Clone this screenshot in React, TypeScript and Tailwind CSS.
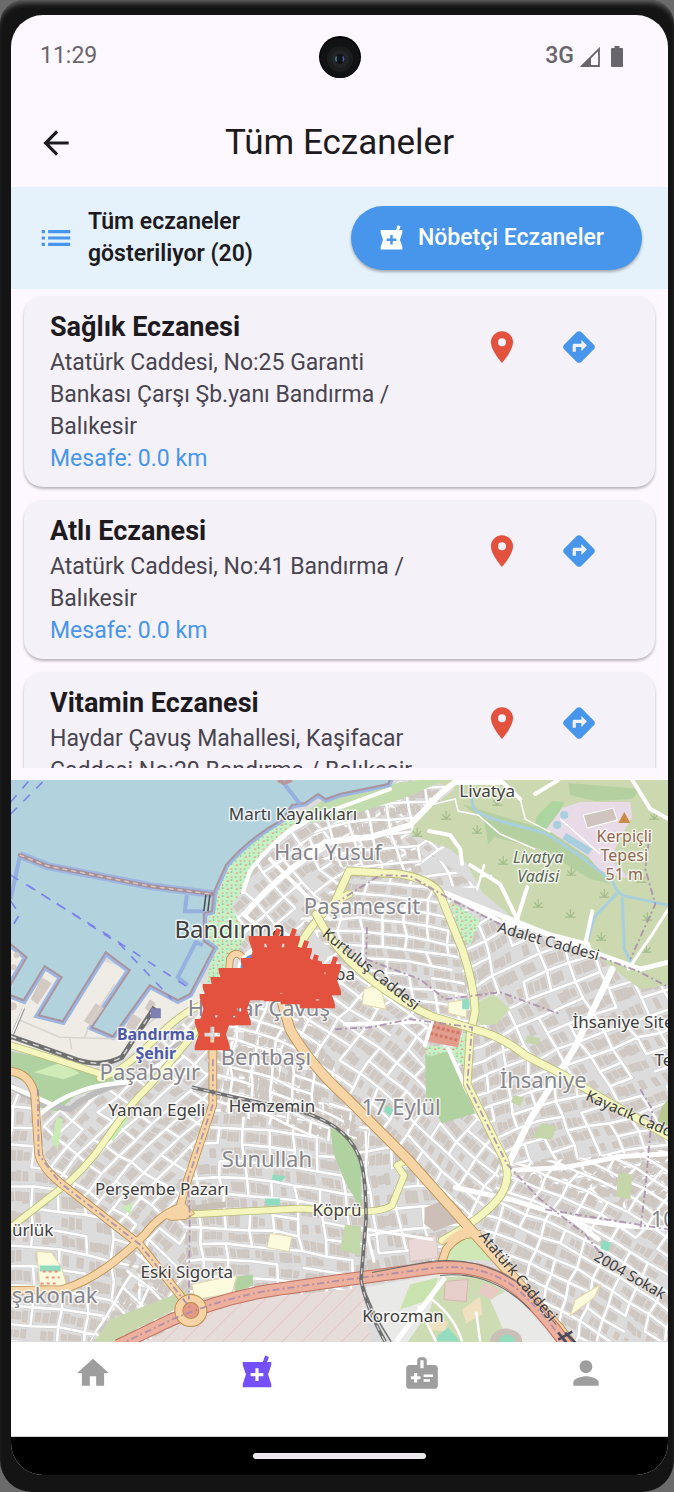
import React from "react";
import {
  MdArrowBack,
  MdDirections,
  MdHome,
  MdList,
  MdLocalPharmacy,
  MdLocationOn,
  MdMedicalInformation,
  MdPerson,
} from "react-icons/md";

type Pharmacy = { name: string; address: string; distance: string };

const pharmacies: Pharmacy[] = [
  {
    name: "Sağlık Eczanesi",
    address: "Atatürk Caddesi, No:25 Garanti Bankası Çarşı Şb.yanı Bandırma / Balıkesir",
    distance: "0.0 km",
  },
  {
    name: "Atlı Eczanesi",
    address: "Atatürk Caddesi, No:41 Bandırma / Balıkesir",
    distance: "0.0 km",
  },
  {
    name: "Vitamin Eczanesi",
    address: "Haydar Çavuş Mahallesi, Kaşifacar Caddesi No:20 Bandırma / Balıkesir",
    distance: "0.0 km",
  },
];

/* ---------- Street blocks: jittered grids clipped to each district ---------- */

type District = {
  id: string;
  area: string;
  cx: number;
  cy: number;
  reach: number;
  angle: number;
  w: number;
  h: number;
};

const districts: District[] = [
  { id: "west", area: "11,1085 40,1100 45,1165 190,1300 120,1342 11,1342", cx: 90, cy: 1220, reach: 170, angle: 6, w: 27, h: 19 },
  { id: "pasabayir", area: "60,1110 130,1070 205,1005 215,1100 180,1210 140,1245 45,1170 42,1110", cx: 130, cy: 1130, reach: 160, angle: -48, w: 24, h: 14 },
  { id: "sigorta", area: "140,1245 185,1205 195,1310 190,1342 90,1342", cx: 160, cy: 1280, reach: 110, angle: 38, w: 24, h: 17 },
  { id: "sunullah", area: "213,1030 290,1030 370,1120 366,1290 190,1310 182,1210 213,1110", cx: 275, cy: 1170, reach: 180, angle: 3, w: 25, h: 16 },
  { id: "hacicavus", area: "200,985 290,985 345,1090 360,1150 213,1110", cx: 280, cy: 1060, reach: 120, angle: 16, w: 21, h: 12 },
  { id: "yusuf", area: "222,905 262,845 345,790 410,781 450,800 450,845 400,880 345,875 300,945 240,960", cx: 330, cy: 870, reach: 150, angle: -38, w: 24, h: 15 },
  { id: "sahil", area: "330,815 400,783 450,781 410,840 480,890 430,885 350,872 300,850", cx: 380, cy: 840, reach: 120, angle: -10, w: 20, h: 14 },
  { id: "pasamescit", area: "300,920 350,874 410,876 445,900 475,1030 420,1015 340,960", cx: 390, cy: 940, reach: 120, angle: 3, w: 22, h: 12 },
  { id: "merkez", area: "285,985 340,950 430,1015 475,1030 467,1090 505,1165 475,1225 400,1155 300,1050", cx: 390, cy: 1085, reach: 170, angle: 38, w: 24, h: 15 },
  { id: "adalet", area: "445,895 520,925 600,955 668,975 668,1130 560,1070 475,1030", cx: 570, cy: 1010, reach: 160, angle: -24, w: 25, h: 18 },
  { id: "ihsaniye", area: "472,1030 560,1070 668,1135 668,1220 505,1180 468,1090", cx: 570, cy: 1120, reach: 150, angle: -16, w: 22, h: 15 },
  { id: "dogu", area: "505,1165 668,1150 668,1342 565,1342 480,1225", cx: 590, cy: 1250, reach: 160, angle: 27, w: 22, h: 14 },
  { id: "kopru", area: "340,1115 410,1160 475,1235 440,1275 366,1285 366,1170", cx: 405, cy: 1215, reach: 120, angle: -8, w: 25, h: 20 },
];

function makeRandom(seed: number) {
  let s = seed;
  return () => {
    s = (s * 16807) % 2147483647;
    return s / 2147483647;
  };
}

function buildDistrict(d: District, seed: number) {
  const rnd = makeRandom(seed);
  const rad = (d.angle * Math.PI) / 180;
  const cos = Math.cos(rad);
  const sin = Math.sin(rad);
  const cols = Math.ceil(d.reach / d.w);
  const rows = Math.ceil(d.reach / d.h);
  const nodes = new Map<string, [number, number]>();
  for (let i = -cols; i <= cols + 1; i++) {
    for (let j = -rows; j <= rows + 1; j++) {
      const bend = Math.sin(i * 0.45 + seed) * 6 + Math.sin(j * 0.3) * 3;
      const x = i * d.w + (rnd() - 0.5) * 4 + Math.sin(j * 0.35 + seed) * 8;
      const y = j * d.h + (rnd() - 0.5) * 3 + bend;
      nodes.set(`${i},${j}`, [d.cx + x * cos - y * sin, d.cy + x * sin + y * cos]);
    }
  }
  const at = (i: number, j: number) => nodes.get(`${i},${j}`)!;
  let streets = "";
  let houses = "";
  for (let i = -cols; i <= cols; i++) {
    for (let j = -rows; j <= rows; j++) {
      const a = at(i, j);
      const b = at(i + 1, j);
      const c = at(i + 1, j + 1);
      const e = at(i, j + 1);
      if (rnd() > 0.12) streets += `M${a[0].toFixed(1)} ${a[1].toFixed(1)}L${b[0].toFixed(1)} ${b[1].toFixed(1)}`;
      if (rnd() > 0.22) streets += `M${a[0].toFixed(1)} ${a[1].toFixed(1)}L${e[0].toFixed(1)} ${e[1].toFixed(1)}`;
      const point = (u: number, v: number) => {
        const px = (a[0] * (1 - u) + b[0] * u) * (1 - v) + (e[0] * (1 - u) + c[0] * u) * v;
        const py = (a[1] * (1 - u) + b[1] * u) * (1 - v) + (e[1] * (1 - u) + c[1] * u) * v;
        return `${px.toFixed(1)} ${py.toFixed(1)}`;
      };
      for (let k = 0; k < 3; k++) {
        if (rnd() < 0.12) continue;
        const u0 = 0.14 + k * 0.26;
        const u1 = u0 + 0.17 + rnd() * 0.07;
        const v0 = 0.2 + rnd() * 0.12;
        const v1 = 0.68 + rnd() * 0.14;
        houses += `M${point(u0, v0)}L${point(u1, v0)}L${point(u1, v1)}L${point(u0, v1)}Z`;
      }
    }
  }
  return { streets, houses };
}

const builtDistricts = districts.map((d, i) => ({ ...d, ...buildDistrict(d, 37 + i * 911) }));

/* ---------- Roads ---------- */

const yellowRoads = [
  { d: "M11 1046C45 1056 75 1066 105 1076M100 1079C140 1067 160 1024 200 1006", w: 6 },
  { d: "M205 1022C180 1050 165 1072 140 1096C110 1128 105 1150 70 1182L11 1228", w: 6 },
  { d: "M300 945Q325 905 349 895M334 905L349 872L400 875Q438 882 442 900L462 950Q474 985 475 1012L470 1035L467 1085L500 1152Q514 1175 500 1197Q482 1220 442 1241", w: 7 },
  { d: "M316 915Q332 945 350 962Q385 996 432 1017L474 1030Q502 1037 525 1056L562 1075L600 1098L668 1137", w: 7 },
  { d: "M188 1215L300 1209L340 1212Q380 1214 392 1206L404 1176L397 1166L409 1160", w: 6 },
];

const orangeRoads = [
  { d: "M11 1072Q30 1074 35 1095L39 1155Q42 1168 60 1183L140 1245L190 1308", w: 7 },
  { d: "M213 1040L213 1105L188 1180L180 1208Q160 1215 145 1235Q100 1280 62 1290L11 1291", w: 7 },
  { d: "M228 985L230 960Q236 948 246 962", w: 6 },
  { d: "M280 995L290 1030Q310 1065 345 1097L408 1160L475 1235L560 1330L572 1346", w: 9 },
  { d: "M440 1268L446 1250Q460 1231 480 1235", w: 7 },
];

const trunkRoad = "M118 1346L170 1321Q220 1299 270 1291L340 1281L430 1269Q485 1262 520 1292Q545 1315 568 1348";

const coast =
  "M0 770L392 776L388 785L340 795L326 800L318 795L305 804L292 806L283 820Q250 838 226 866L214 893L212 912L204 914L204 942L214 949L190 995L178 1001L150 986L113 1037L92 1028L130 971L106 953L63 1022L39 1016L62 978L45 967L24 1001L6 994L27 958L11 945L0 945Z";

/* ---------- Labels ---------- */

type Label = { x: number; y: number; text: string; size: number; fill: string; rotate?: number; weight?: number; italic?: boolean };

const dark = "#3f3f3f";
const grey = "#85858c";
const brown = "#90684e";
const indigo = "#4d5aa8";

const labels: Label[] = [
  { x: 487, y: 798, text: "Livatya", size: 17, fill: dark },
  { x: 293, y: 821, text: "Martı Kayalıkları", size: 17, fill: dark },
  { x: 328, y: 861, text: "Hacı Yusuf", size: 22, fill: grey },
  { x: 362, y: 915, text: "Paşamescit", size: 22, fill: grey },
  { x: 230, y: 939, text: "Bandırma", size: 24, fill: dark },
  { x: 624, y: 843, text: "Kerpiçli", size: 16, fill: brown },
  { x: 624, y: 862, text: "Tepesi", size: 16, fill: brown },
  { x: 624, y: 881, text: "51 m", size: 16, fill: brown },
  { x: 538, y: 864, text: "Livatya", size: 16, fill: "#5b6654", italic: true },
  { x: 538, y: 883, text: "Vadisi", size: 16, fill: "#5b6654", italic: true },
  { x: 547, y: 947, text: "Adalet Caddesi", size: 15, fill: dark, rotate: 16 },
  { x: 368, y: 974, text: "Kurtuluş Caddesi", size: 15, fill: dark, rotate: 39 },
  { x: 345, y: 981, text: "ba", size: 17, fill: dark },
  { x: 259, y: 1017, text: "Haydar Çavuş", size: 22, fill: grey },
  { x: 629, y: 1029, text: "İhsaniye Sitesi", size: 17, fill: dark },
  { x: 663, y: 1067, text: "Te", size: 17, fill: dark },
  { x: 156, y: 1041, text: "Bandırma", size: 16, fill: indigo, weight: 700 },
  { x: 156, y: 1060, text: "Şehir", size: 16, fill: indigo, weight: 700 },
  { x: 266, y: 1066, text: "Bentbaşı", size: 22, fill: grey },
  { x: 150, y: 1081, text: "Paşabayır", size: 22, fill: grey },
  { x: 543, y: 1089, text: "İhsaniye", size: 22, fill: grey },
  { x: 157, y: 1117, text: "Yaman Egeli", size: 17, fill: dark },
  { x: 272, y: 1113, text: "Hemzemin", size: 17, fill: dark },
  { x: 401, y: 1116, text: "17 Eylül", size: 22, fill: grey },
  { x: 636, y: 1123, text: "Kayacık Caddesi", size: 15, fill: dark, rotate: 24 },
  { x: 267, y: 1168, text: "Sunullah", size: 22, fill: grey },
  { x: 162, y: 1196, text: "Perşembe Pazarı", size: 17, fill: dark },
  { x: 337, y: 1217, text: "Köprü", size: 17, fill: dark },
  { x: 33, y: 1237, text: "ürlük", size: 17, fill: dark },
  { x: 663, y: 1228, text: "10", size: 22, fill: grey },
  { x: 187, y: 1278, text: "Eski Sigorta", size: 17, fill: dark },
  { x: 55, y: 1303, text: "şakonak", size: 22, fill: grey },
  { x: 403, y: 1322, text: "Korozman", size: 17, fill: dark },
  { x: 514, y: 1280, text: "Atatürk Caddesi", size: 15, fill: dark, rotate: 50 },
  { x: 627, y: 1280, text: "2004 Sokak", size: 15, fill: dark, rotate: 30 },
];

/* Top-left corner of the body of each pharmacy marker */
const markers: [number, number][] = [
  [249, 937], [265, 937], [277, 949], [287, 963], [306, 965], [241, 959],
  [252, 962], [219, 969], [230, 970], [211, 978], [203, 985], [200, 995],
  [216, 995], [245, 966], [264, 971], [281, 974], [300, 978], [290, 969],
  [268, 955], [195, 1020],
];

const pharmacyShape =
  "M21 5h-2.64l1.14-3.14L17.15 1l-1.46 4H3v2l2 6-2 6v2h18v-2l-2-6 2-6V5zm-5 9h-3v3h-2v-3H8v-2h3V9h2v3h3v2z";

const scrubs: [number, number][] = [
  [446, 820], [477, 834], [417, 837], [503, 865], [571, 876], [538, 908], [570, 918],
  [604, 898], [601, 941], [646, 953], [647, 921], [641, 883], [497, 806], [654, 820],
];

function CityMap() {
  return (
    <svg
      viewBox="11 781 657 561"
      preserveAspectRatio="xMidYMid slice"
      className="block h-full w-full"
      role="img"
      aria-label="Bandırma haritası"
      fontFamily="'Noto Sans', 'Open Sans', sans-serif"
    >
      <defs>
        {districts.map((d) => (
          <clipPath id={`clip-${d.id}`} key={d.id}>
            <polygon points={d.area} />
          </clipPath>
        ))}
        <pattern id="hatch" width="14" height="14" patternUnits="userSpaceOnUse" patternTransform="rotate(45)">
          <path d="M0 0V14" stroke="#e3bfbb" strokeWidth="1.5" />
        </pattern>
        <pattern id="garden" width="9" height="8" patternUnits="userSpaceOnUse">
          <path d="M2 2h2M6 6h1.5" stroke="#ee8d78" strokeWidth="1.5" />
          <path d="M6 1h1.5M1 6h1.5" stroke="#6fc9a0" strokeWidth="1.5" />
        </pattern>
      </defs>

      <rect x="0" y="770" width="690" height="590" fill="#dddcdc" />

      {builtDistricts.map((d) => (
        <g key={d.id} clipPath={`url(#clip-${d.id})`}>
          <path d={d.houses} fill="#d0c8c2" stroke="#c8c0ba" strokeWidth="0.5" />
          <path d={d.streets} fill="none" stroke="#cdcbcb" strokeWidth="3.6" strokeLinecap="round" />
          <path d={d.streets} fill="none" stroke="#ffffff" strokeWidth="2.6" strokeLinecap="round" />
        </g>
      ))}

      {/* Harbour quays */}
      <path d="M0 940L60 950L150 975L205 985L198 1005L160 1035L120 1062L90 1070L0 1040Z" fill="#efece6" />

      {/* Green areas */}
      <path d="M214 893L226 866Q250 838 283 820L300 822L262 852L245 890L232 905L245 940L222 975L206 985L214 949L206 938Z" fill="#c8f0c4" />
      <path d="M214 893L226 866Q250 838 283 820L300 822L262 852L245 890L232 905L245 940L222 975L206 985L214 949L206 938Z" fill="url(#garden)" />
      <path d="M428 781H672V985L640 990L590 952L520 925L482 893L466 864L450 850L410 835L422 815L455 790Z" fill="#cbd8b0" />
      <path d="M462 805L530 826L570 840L598 865L610 885L590 880L540 850L495 838L488 845L484 822Z" fill="#b5d0a0" />
      <path d="M568 784L640 790L632 800L595 802L570 796Z" fill="#b5d0a0" />
      <path d="M536 818L552 802L564 803L550 830L534 834Z" fill="#acd5a0" />
      <path d="M340 792L420 781L445 781L410 797L345 818L312 824L300 815Z" fill="#c2dcae" />
      <path d="M450 902L480 921L470 946L462 940Z" fill="#c8f0c4" />
      <path d="M450 902L480 921L470 946L462 940Z" fill="url(#garden)" />
      <path d="M11 1052L60 1062L130 1078L75 1097L58 1112L38 1108L30 1085L11 1076Z" fill="#b0d1a0" />
      <path d="M34 1073L62 1063L80 1074L64 1080Z" fill="#cfebb8" />
      <path d="M425 1055L448 1049L462 1085L475 1114L442 1124L426 1098Z" fill="#b0d1a0" />
      <path d="M424 1046L454 1048L467 1030L465 1070L448 1052L428 1058Z" fill="#c8f0c4" />
      <path d="M424 1046L454 1048L467 1030L465 1070L448 1052L428 1058Z" fill="url(#garden)" />
      <path d="M430 1020L462 1030L458 1048L425 1042Z" fill="#e29c8c" />
      <path d="M432 1027L460 1034M430 1034L458 1041" stroke="#d07767" strokeWidth="3" strokeDasharray="3 2" />
      <path d="M330 1128L352 1138L361 1165L362 1212L344 1180L334 1155Z" fill="#b0d1a0" />
      <path d="M445 1262L450 1248Q463 1233 482 1237L496 1262Q470 1259 445 1262Z" fill="#d0e8b6" />
      <path d="M345 1225L361 1227L360 1256L340 1250Z" fill="#c2d8a8" />
      <path d="M532 1138L541 1124L556 1127L552 1140Z M618 1173L632 1175L630 1200L616 1197Z M513 1096L524 1098L520 1107L511 1103Z M527 1036L540 1039L538 1046L525 1043Z" fill="#c6d6ab" />
      <path d="M474 1005L494 995L510 1010L496 1025L480 1026Z" fill="#cbdcae" />
      <path d="M57 1118L63 1120L58 1150L52 1142Z M120 1120L130 1118L113 1142L110 1138Z M122 1208L134 1203L130 1215Z" fill="#c8ebb4" />
      <path d="M662 1107L672 1095V1128L657 1122Z" fill="#b9c690" />
      <path d="M95 1342L110 1320L185 1291L195 1300L125 1335L115 1342Z" fill="#c8d8ac" />
      <path d="M237 1277L253 1275L253 1286L235 1293Z" fill="#b0d1a0" />

      {/* Schools, shops and squares */}
      <path d="M37 1252L52 1253L62 1268L68 1290L40 1285Z M270 1234L292 1237L289 1252L267 1248Z M215 1280L237 1276L232 1294L195 1300L192 1285Z M364 990L380 985L386 1010L362 1005Z M448 1003L468 1000L466 1018L448 1014Z M575 1300L600 1285L594 1298L570 1316Z" fill="#fdfbdd" stroke="#e2d5ae" strokeWidth="1" />
      <path d="M40 1266L61 1266V1272H40Z M273 1175L286 1177L281 1182L272 1180Z M265 1199H280V1206H266Z M462 1000H469V1010H462Z M386 1106L394 1110L390 1117L384 1112Z M602 1241L611 1243L608 1252L600 1249Z" fill="#8fdcc0" />
      <path d="M43 1272h15M46 1278h14M41 1284h16" stroke="#ef8e79" strokeWidth="2" strokeDasharray="3 3" />
      <path d="M425 1208L448 1199L462 1210L460 1222L434 1232L424 1224Z" fill="#cbbfb7" />
      <path d="M408 1240L436 1236L438 1258L410 1262Z" fill="#ead8d6" stroke="#d9c5c3" />
      <path d="M192 1206L226 1202V1208L192 1212Z" fill="#c8c0b4" />

      {/* Livatya quarry */}
      <path d="M546 830L562 809L580 803L630 803L632 818L622 835L610 860L630 880L600 872L588 858Z" fill="#e8dae6" />
      <path d="M583 816L613 809L617 821L587 829Z" fill="#cfc4be" stroke="#fff" strokeWidth="1" />
      <circle cx="564" cy="816" r="4" fill="#a9cfdf" />
      <circle cx="557" cy="826" r="4" fill="#a9cfdf" />
      <path d="M566 834L592 850L588 856L562 840Z" fill="#a9cfdf" />
      <path d="M624 813L630 824H618Z" fill="#c98b45" />
      <path d="M472 798C470 812 480 816 500 822L545 834L580 857L612 882Q617 897 630 898L672 907M617 894L594 918L588 940M622 898L624 950L632 965" fill="none" stroke="#a9cfdf" strokeWidth="3" />
      <path d="M430 806L455 800L458 812L478 816L500 835L535 850M520 800L525 820L550 833M560 820L600 855" fill="none" stroke="#fff" strokeWidth="1.5" />
      {scrubs.map(([x, y]) => (
        <path key={`${x}-${y}`} d={`M${x - 5} ${y}h10M${x} ${y}v-8M${x} ${y}l-4 -5M${x} ${y}l4 -5`} stroke="#a3bd8b" strokeWidth="1.2" fill="none" />
      ))}

      {/* Industrial zone south of the trunk road */}
      <path d="M140 1346L190 1318L250 1300L362 1288L372 1346Z" fill="#e6dcd9" />
      <path d="M140 1346L190 1318L250 1300L362 1288L372 1346Z" fill="url(#hatch)" />
      <path d="M366 1288L440 1274L480 1274L510 1290L560 1346L392 1346L374 1318Z" fill="#e9e9e7" />
      <path d="M440 1278L480 1276L505 1292L490 1300L510 1346H405L430 1310Z" fill="#cddcb2" />
      <path d="M410 1285L438 1278L430 1300L400 1310Z" fill="#c8e3ae" />
      <path d="M445 1282L468 1280L466 1302L444 1300Z" fill="#e6cfcb" stroke="#d8b7b0" />
      <path d="M484 1283L500 1290L492 1300L478 1294Z" fill="#e8c9c3" />
      <path d="M462 1310L480 1297L482 1315L466 1324Z M432 1318L448 1322L445 1332L428 1330Z" fill="#efe0c0" />
      <path d="M438 1336L448 1328L460 1342H436Z" fill="#93dcc0" />
      <ellipse cx="506" cy="1342" rx="16" ry="13" fill="#c9bfb6" />
      <ellipse cx="507" cy="1342" rx="8" ry="7" fill="#93dcc0" />
      <path d="M396 1342L445 1278" fill="none" stroke="#fff" strokeWidth="5" />
      <path d="M418 1306L436 1342M432 1300Q455 1318 462 1342M476 1312L480 1342" fill="none" stroke="#fff" strokeWidth="2.5" />

      {/* Sea */}
      <path d={coast} fill="#b2d2dd" stroke="#9db6e2" strokeWidth="7" />
      <path d={coast} fill="#b2d2dd" stroke="#a9959f" strokeWidth="2" />
      <path d="M20 856L48 867L100 877L150 887L213 895" fill="none" stroke="#9db6e2" strokeWidth="8" />
      <path d="M20 856L48 867L100 877L150 887L213 895" fill="none" stroke="#a5909b" strokeWidth="4" strokeLinecap="round" />
      <path d="M20 856L48 867L100 877L150 887L213 895" fill="none" stroke="#ddc5bd" strokeWidth="1.5" strokeDasharray="5 4" />
      <path d="M20 858L11 900M187 896L185 912L204 912M203 946L196 943L178 978L188 986M282 782L300 805" fill="none" stroke="#96b0e0" strokeWidth="4" />
      <path d="M278 781L284 784L292 781" fill="none" stroke="#b9979a" strokeWidth="4" />
      <g fill="none" stroke="#7c83ea" strokeWidth="1.6" strokeDasharray="9 9">
        <path d="M11 803L30 781M11 815L45 781" />
        <path d="M11 876L105 934L188 988M28 886L120 945L172 1000" />
        <path d="M11 902L20 915L11 930" />
      </g>
      <g fill="#d3cac4">
        <path d="M42 978L52 984L38 1005L31 1000Z M96 1004L104 1009L92 1026L84 1022Z M132 1014L142 1020L134 1032L126 1028Z M150 1000L156 1004L150 1013L145 1009Z" />
        <circle cx="17" cy="956" r="3" />
        <circle cx="14" cy="968" r="3" />
        <circle cx="13" cy="1007" r="4" />
      </g>
      <path d="M14 1030L24 1008M18 1020L60 1038L130 1040L160 1015M70 1038L72 1050M85 1038L92 1020L115 985" fill="none" stroke="#d7d4cf" strokeWidth="1.5" />
      <path d="M11 1040L24 1009" fill="none" stroke="#8f8d8a" strokeWidth="3" />
      <path d="M11 1039L24 1008" fill="none" stroke="#ffffff" strokeWidth="1.5" />

      {/* White main streets */}
      <path d="M11 1087L42 1104L70 1110Q95 1090 130 1082L200 1030" fill="none" stroke="#bdbdbd" strokeWidth="6" strokeLinecap="round" />
      <g fill="none" stroke="#fff" strokeLinecap="round">
        <path d="M11 1087L50 1104M40 1115Q75 1085 130 1083L165 1062L200 1030" strokeWidth="4.5" />
        <path d="M245 915Q275 880 308 858L325 843L370 838L410 826L440 795L455 783H500" strokeWidth="6" />
        <path d="M243 915L262 930M243 893L250 872Q290 820 330 812L390 790M330 920L270 860" strokeWidth="4" />
        <path d="M429 832L450 836L460 850L462 865M447 894L500 922L588 945L590 952M470 866L500 885L518 922M527 888L517 920M592 912L585 945" strokeWidth="4" />
        <path d="M484 866L477 890M481 877L491 877" strokeWidth="2.5" />
        <path d="M445 894L515 922L590 952L640 970L672 962" strokeWidth="5" />
        <path d="M612 970L575 1048L530 1120L508 1165" strokeWidth="6.5" />
        <path d="M508 1171L565 1168L620 1157L672 1154" strokeWidth="5" />
        <path d="M455 1188L510 1200L572 1219L620 1226L672 1229M570 1218L598 1240" strokeWidth="5" />
        <path d="M632 781L650 810L672 822M558 781L535 795M500 781L520 800M425 1046L432 1022L345 1025M448 1049L467 1092" strokeWidth="4" />
        <path d="M432 1240L368 1230M366 1230L374 1262M628 970L652 935L668 910" strokeWidth="3" />
      </g>

      {/* Yellow and orange roads */}
      {yellowRoads.map((r) => (
        <g key={r.d} fill="none" strokeLinecap="round" strokeLinejoin="round">
          <path d={r.d} stroke="#b9bb78" strokeWidth={r.w + 1.6} />
          <path d={r.d} stroke="#f4f6bd" strokeWidth={r.w} />
        </g>
      ))}
      {orangeRoads.map((r) => (
        <path key={r.d} d={r.d} fill="none" stroke="#b98d4e" strokeWidth={r.w + 1.6} strokeLinejoin="round" />
      ))}
      <path d="M166 1219L181 1200L195 1214L186 1220L172 1221Z" fill="#f6d4a5" stroke="#b98d4e" strokeWidth="0.8" />
      {orangeRoads.map((r) => (
        <path key={r.d} d={r.d} fill="none" stroke="#f6d4a5" strokeWidth={r.w} strokeLinejoin="round" />
      ))}
      <path d="M440 1245L450 1236L466 1226L484 1240L470 1236Z" fill="#f6d4a5" />

      <path d={trunkRoad} fill="none" stroke="#c0705e" strokeWidth="13" />
      <path d={trunkRoad} fill="none" stroke="#edb09c" strokeWidth="11" />
      <circle cx="191" cy="1311" r="12" fill="#e59a88" stroke="#b98d4e" strokeWidth="9" />
      <circle cx="191" cy="1311" r="12" fill="none" stroke="#f6d4a5" strokeWidth="7" />
      <path d="M372 1273L430 1262Q480 1256 520 1285L556 1325M440 1276Q490 1270 530 1310" fill="none" stroke="#6a6a6a" strokeWidth="1" />

      {/* Administrative borders */}
      <g fill="none" stroke="#a78aac" strokeWidth="1.8" strokeDasharray="7 3 2 3" opacity="0.85">
        <path d="M38 1090L39 1155L60 1183L140 1245L190 1308" />
        <path d="M213 1060L213 1105L188 1180L190 1215L189 1300" />
        <path d={trunkRoad} />
        <path d="M334 905L380 876L410 877L450 900L500 925M366 965L367 925M366 960L420 980L445 1000L500 993L560 1015" />
        <path d="M335 1030L370 1028L410 1020L472 1028L467 1085L507 1165L540 1200L585 1235L605 1260M545 1210L668 1230" />
        <path d="M600 958L638 972L672 990M650 830L645 870L655 905L630 960M640 1090L652 1110L645 1190L640 1230" />
      </g>

      {/* Railway */}
      <g fill="none" stroke="#6f6f6f">
        <path d="M11 1037Q40 1047 70 1058Q100 1070 122 1058L155 1008" strokeWidth="5" />
        <path d="M192 1088L235 1098L300 1112Q345 1125 358 1155Q366 1170 366 1220L361 1280Q365 1305 385 1342" strokeWidth="3.6" />
        <path d="M361 1280Q370 1310 391 1342" strokeWidth="1.5" />
      </g>
      <g fill="none" stroke="#d7d7d7" strokeDasharray="6 6">
        <path d="M11 1037Q40 1047 70 1058Q100 1070 122 1058L155 1008" strokeWidth="1.5" />
        <path d="M192 1088L235 1098L300 1112Q345 1125 358 1155Q366 1170 366 1220L361 1280Q365 1305 385 1342" strokeWidth="1.2" />
      </g>
      <path d="M206 896L204 912M210 896L208 912" stroke="#4d4d4d" strokeWidth="1.5" />
      <rect x="151" y="1009" width="10" height="10" fill="#7c80b2" />
      <path d="M558 1333L568 1345M565 1333L576 1344M558 1340L572 1332" stroke="#4a4a5a" strokeWidth="2.5" />

      {/* Place and street names */}
      {labels.map((l) => (
        <text
          key={`${l.text}-${l.x}-${l.y}`}
          x={l.x}
          y={l.y}
          textAnchor="middle"
          fontSize={l.size}
          fontWeight={l.weight ?? 400}
          fontStyle={l.italic ? "italic" : undefined}
          fill={l.fill}
          stroke="#ffffff"
          strokeOpacity={l.rotate ? 0.2 : 0.75}
          strokeWidth="3"
          strokeLinejoin="round"
          paintOrder="stroke"
          transform={l.rotate ? `rotate(${l.rotate} ${l.x} ${l.y})` : undefined}
        >
          {l.text}
        </text>
      ))}

      {/* Current location and pharmacy markers */}
      <circle cx="256" cy="970" r="17" fill="#4796ec" stroke="#fff" strokeWidth="3" />
      {markers.map(([x, y]) => (
        <path key={`${x}-${y}`} d={pharmacyShape} fill="#e2523f" transform={`translate(${x - 6} ${y - 10}) scale(1.95)`} />
      ))}
      <path d="M258 948H300L325 975V1000L270 992L225 1010L212 990L245 975Z" fill="#e2523f" />
    </svg>
  );
}

function StatusBar() {
  return (
    <div className="relative flex h-[83px] shrink-0 items-center justify-between pr-[45px] pl-[29px] text-[23px] text-[#68656b]">
      <span>11:29</span>
      <div className="absolute top-[21px] left-1/2 size-[42px] -translate-x-1/2 rounded-full bg-black">
        <svg viewBox="0 0 42 42" className="size-full" aria-hidden="true">
          <circle cx="21" cy="22" r="20" fill="#111214" />
          <circle cx="21" cy="23" r="13" fill="#1b1c1e" />
          <circle cx="21" cy="23" r="9" fill="#222426" />
          <circle cx="21" cy="23" r="5" fill="#10151c" />
          <path d="M17.5 20.5q-1.5 2.5 0 5" stroke="#4c8088" strokeWidth="1.5" fill="none" />
          <path d="M24 20.5q1.5 2.5 0 5" stroke="#4b62a0" strokeWidth="1.5" fill="none" />
        </svg>
      </div>
      <div className="flex items-center gap-[6px]">
        <span className="font-medium">3G</span>
        <svg viewBox="0 0 20 20" className="size-5" aria-hidden="true">
          <path d="M19 2V19H2Z" fill="none" stroke="currentColor" strokeWidth="1.8" />
          <path d="M11 10V19H1Z" fill="currentColor" />
        </svg>
        <svg viewBox="0 0 12 21" className="ml-[5px] h-[21px] w-3" aria-hidden="true">
          <path d="M3.5 0h5v2H11a1 1 0 0 1 1 1v17a1 1 0 0 1-1 1H1a1 1 0 0 1-1-1V3a1 1 0 0 1 1-1h2.5z" fill="currentColor" />
        </svg>
      </div>
    </div>
  );
}

function PharmacyCard({ name, address, distance }: Pharmacy) {
  return (
    <li className="flex shrink-0 items-start rounded-[19px] bg-[#f4f1f9] py-3 pr-[38px] pl-[26px] shadow-[0_2px_3px_rgba(0,0,0,0.28)]">
      <div className="min-w-0 flex-1 pr-6 text-[23px] leading-8">
        <h2 className="text-[27px] leading-[39px] font-bold text-[#1d1b20]">{name}</h2>
        <p className="text-[#49454f]">{address}</p>
        <p className="text-[#4796ec]">Mesafe: {distance}</p>
      </div>
      <button type="button" aria-label="Haritada göster" className="flex size-[77px] items-center justify-center text-[#e2523f]">
        <MdLocationOn size={38} />
      </button>
      <button type="button" aria-label="Yol tarifi" className="flex size-[77px] items-center justify-center text-[#4796ec]">
        <MdDirections size={38} />
      </button>
    </li>
  );
}

const tabs = [
  { label: "Ana sayfa", Icon: MdHome, active: false },
  { label: "Eczaneler", Icon: MdLocalPharmacy, active: true },
  { label: "Sağlık kartı", Icon: MdMedicalInformation, active: false },
  { label: "Profil", Icon: MdPerson, active: false },
];

export default function App() {
  return (
    <div className="h-screen bg-[#6b6b6b] font-['Roboto',sans-serif]">
      <div className="h-full rounded-t-[24px] rounded-b-[32px] bg-[#141414] pt-[15px] pr-[6px] pb-[17px] pl-[11px] shadow-[inset_0_6px_6px_-4px_rgba(160,160,160,0.7)]">
        <div className="flex h-full flex-col overflow-hidden rounded-[32px] bg-[#fdf8ff]">
          <StatusBar />

          <header className="grid h-[89px] shrink-0 grid-cols-[90px_1fr_90px] items-center">
            <button type="button" aria-label="Geri" className="flex size-[89px] items-center justify-center text-[#1d1b20]">
              <MdArrowBack size={38} />
            </button>
            <h1 className="text-center text-[35px] leading-[44px] text-[#1d1b20]">Tüm Eczaneler</h1>
          </header>

          <section className="flex shrink-0 items-center justify-between gap-4 bg-[#e5f2fc] px-[26px] py-[19px]">
            <div className="flex items-center gap-[13px]">
              <MdList size={38} className="shrink-0 text-[#4796ec]" />
              <p className="w-[200px] text-[23px] leading-8 font-semibold text-[#1d1b20]">Tüm eczaneler gösteriliyor (20)</p>
            </div>
            <button
              type="button"
              className="flex h-16 shrink-0 items-center gap-3 rounded-full bg-[#4796ec] pr-[38px] pl-[26px] text-[23px] font-medium text-white shadow-[0_2px_3px_rgba(0,0,0,0.3)]"
            >
              <MdLocalPharmacy size={29} />
              Nöbetçi Eczaneler
            </button>
          </section>

          <main className="flex min-h-0 flex-1 flex-col">
            <div className="min-h-0 flex-[7]">
              <div className="h-full pb-3">
                <ul className="flex h-full flex-col gap-[13px] overflow-hidden px-[13px] pt-[7px]">
                  {pharmacies.map((p) => (
                    <PharmacyCard key={p.name} {...p} />
                  ))}
                </ul>
              </div>
            </div>
            <div className="min-h-0 flex-[8] overflow-hidden">
              <CityMap />
            </div>
          </main>

          <nav className="grid h-[95px] shrink-0 grid-cols-4 items-start border-b border-[#cfcfcf] bg-white pt-3">
            {tabs.map(({ label, Icon, active }) => (
              <button
                key={label}
                type="button"
                aria-label={label}
                className={active ? "flex justify-center text-[#7450f8]" : "flex justify-center text-[#9e9e9e]"}
              >
                <Icon size={38} />
              </button>
            ))}
          </nav>

          <div className="flex h-[38px] shrink-0 items-center justify-center bg-black">
            <span className="h-[6px] w-[173px] rounded-full bg-[#eceaec]" />
          </div>
        </div>
      </div>
    </div>
  );
}
